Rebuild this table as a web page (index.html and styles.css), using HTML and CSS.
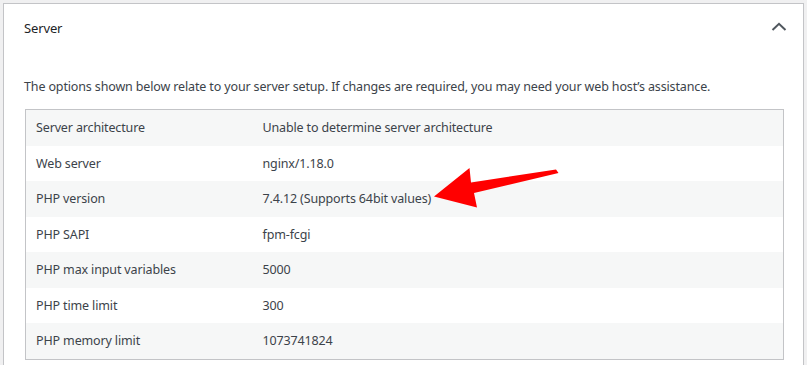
FILE: index.html
```html
<!DOCTYPE html>
<html lang="en">
<head>
<meta charset="utf-8">
<title>Site Health - Server</title>
<link rel="stylesheet" href="styles.css">
</head>
<body>
<div class="page">
  <section class="panel">
    <div class="panel-head">
      <h3 class="panel-title">Server</h3>
      <svg class="chevron" width="16" height="10" viewBox="0 0 16 10" aria-hidden="true">
        <path d="M1.5 8 L8 1.8 L14.5 8" fill="none" stroke="#50575e" stroke-width="2"/>
      </svg>
    </div>
    <div class="panel-body">
      <p class="desc">The options shown below relate to your server setup. If changes are required, you may need your web host’s assistance.</p>
      <table class="info">
        <colgroup>
          <col class="col-label">
          <col class="col-value">
        </colgroup>
        <tbody>
          <tr><td>Server architecture</td><td>Unable to determine server architecture</td></tr>
          <tr><td>Web server</td><td>nginx/1.18.0</td></tr>
          <tr><td>PHP version</td><td>7.4.12 (Supports 64bit values)</td></tr>
          <tr><td>PHP SAPI</td><td>fpm-fcgi</td></tr>
          <tr><td>PHP max input variables</td><td>5000</td></tr>
          <tr><td>PHP time limit</td><td>300</td></tr>
          <tr><td>PHP memory limit</td><td>1073741824</td></tr>
        </tbody>
      </table>
    </div>
    <svg class="arrow" width="807" height="365" viewBox="0 0 807 365" aria-hidden="true">
      <polygon points="434,196.5 469.5,168 471,182.5 556,169.5 558.5,173 474,193 477,207.5" fill="#ff0000"/>
    </svg>
  </section>
</div>
</body>
</html>
```

FILE: styles.css
```css
html, body {
  margin: 0;
  padding: 0;
  background: #f0f0f1;
  overflow: hidden;
}

body {
  font-family: "Noto Sans", "Open Sans", sans-serif;
  font-size: 12.5px;
  letter-spacing: -0.14px;
  color: #3c434a;
}

.page {
  padding: 3px 3px 0 3px;
  height: 362px;
}

.panel {
  background: #fff;
  border: 1px solid #c3c4c7;
  border-bottom: none;
  height: 100%;
  box-sizing: border-box;
}

.panel-head {
  display: flex;
  align-items: center;
  justify-content: space-between;
  height: 48px;
  padding: 0 16px 0 20px;
}

.panel-title {
  margin: 0;
  font-size: 13px;
  font-weight: 400;
  color: #1d2327;
}

.chevron {
  display: block;
  margin-top: -2px;
}

.panel-body {
  padding: 0 19px 0 20px;
}

.desc {
  margin: 25px 0 12px 0;
  line-height: 20px;
}

.info {
  width: 759px;
  margin-left: 1px;
  border: 1px solid #c3c4c7;
  border-collapse: collapse;
  table-layout: fixed;
}

.col-label {
  width: 227px;
}

.info td {
  padding: 8px 10px;
  line-height: 19.5px;
  color: #3c434a;
  text-align: left;
  vertical-align: middle;
}

.info tr:nth-child(odd) td {
  background: #f6f7f7;
}

.arrow {
  position: absolute;
  left: 0;
  top: 0;
  pointer-events: none;
}
```
